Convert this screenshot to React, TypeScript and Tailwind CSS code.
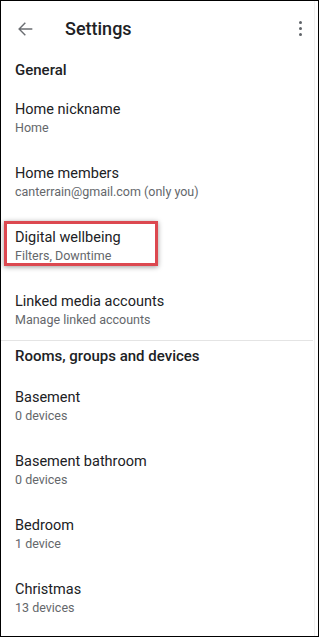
interface SettingRow {
  title: string;
  subtitle: string;
}

const general: SettingRow[] = [
  { title: 'Home nickname', subtitle: 'Home' },
  { title: 'Home members', subtitle: 'canterrain@gmail.com (only you)' },
  { title: 'Digital wellbeing', subtitle: 'Filters, Downtime' },
  { title: 'Linked media accounts', subtitle: 'Manage linked accounts' },
];

const rooms: SettingRow[] = [
  { title: 'Basement', subtitle: '0 devices' },
  { title: 'Basement bathroom', subtitle: '0 devices' },
  { title: 'Bedroom', subtitle: '1 device' },
  { title: 'Christmas', subtitle: '13 devices' },
];

function Row({ row }: { row: SettingRow }) {
  return (
    <div className="flex h-16 flex-col px-[14px] pt-4">
      <span className="text-[14.5px] leading-5 text-[#202124]">{row.title}</span>
      <span className="text-[12.5px] leading-4 text-[#64676b]">{row.subtitle}</span>
    </div>
  );
}

export default function App() {
  return (
    <div className="relative h-[637px] w-[319px] overflow-hidden border border-black bg-white font-['Roboto',sans-serif]">
      <div className="flex h-[55px] items-center px-[13px]">
        <svg viewBox="0 0 24 24" className="h-[22px] w-[22px] fill-[#6b6e72]">
          <path d="M20 11.2H7.5l5.4-5.4-1.1-1.1L4.5 12l7.3 7.3 1.1-1.1-5.4-5.4H20z" />
        </svg>
        <h1 className="ml-[29px] text-[18px] font-medium text-[#202124]">Settings</h1>
        <div className="ml-auto mr-[3px] flex flex-col items-center gap-[2.5px]">
          <span className="h-[3.5px] w-[3.5px] rounded-full bg-[#5f6368]" />
          <span className="h-[3.5px] w-[3.5px] rounded-full bg-[#5f6368]" />
          <span className="h-[3.5px] w-[3.5px] rounded-full bg-[#5f6368]" />
        </div>
      </div>

      <div className="flex h-[28px] items-center px-[14px] text-[15px] font-medium text-[#202124]">General</div>
      {general.map((row) => (
        <Row key={row.title} row={row} />
      ))}

      <div className="mr-[5px] h-px bg-[#e4e4e4]" />

      <div className="flex h-[31px] items-center px-[14px] text-[15px] font-medium text-[#202124]">
        Rooms, groups and devices
      </div>
      {rooms.map((row) => (
        <Row key={row.title} row={row} />
      ))}

      {/* highlight around Digital wellbeing */}
      <div className="absolute left-[3px] top-[220px] h-[45px] w-[154px] border-[3px] border-[#dc4850] shadow-[0_1px_5px_rgba(0,0,0,0.4)]" />
      <div className="absolute right-[3px] top-0 h-full w-px bg-[#f0f0f0]" />
    </div>
  );
}
